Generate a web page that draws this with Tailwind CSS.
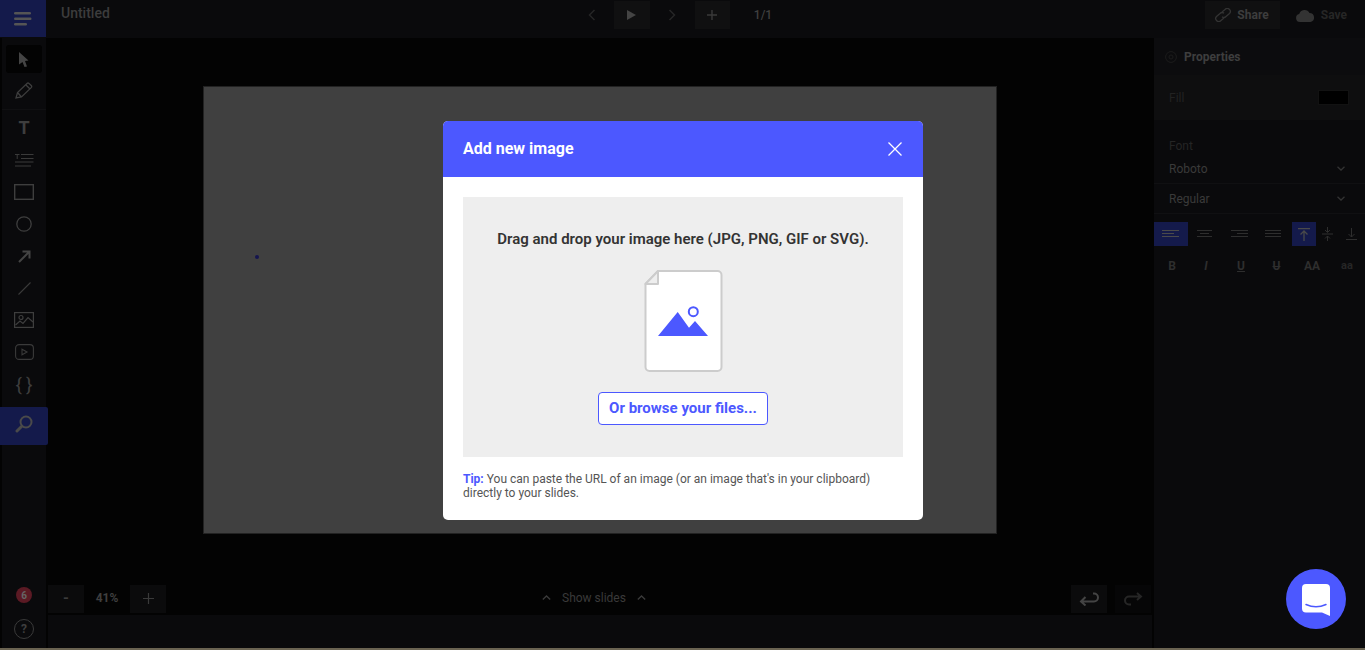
<!DOCTYPE html>
<html lang="en">
  <head>
    <meta charset="UTF-8" />
    <meta name="viewport" content="width=device-width, initial-scale=1.0" />
    <script src="https://cdn.jsdelivr.net/npm/@tailwindcss/browser@4"></script>
    <title>Add new image</title>
  </head>
  <body class="bg-[#030303] overflow-hidden font-['Roboto',sans-serif]">
    <div class="relative w-[1365px] h-[650px] flex flex-col overflow-hidden">
      <!-- top bar -->
      <header class="h-[38px] shrink-0 flex items-start bg-[#0a0a0c]">
        <button class="w-[46px] h-[37px] bg-[#141a4b] flex items-center justify-center">
          <svg width="18" height="14" viewBox="0 0 18 14" fill="#555"><rect width="17" height="2.4" rx="1.2" /><rect y="5.5" width="17.5" height="2.4" rx="1.2" /><rect y="11" width="13" height="2.4" rx="1.2" /></svg>
        </button>
        <span class="ml-[15px] mt-[4px] text-[14px] leading-[18px] font-medium text-[#3c3c3c]">Untitled</span>
        <div class="ml-[470px] flex items-center h-[28px] mt-[1px]">
          <button class="w-[24px] h-[28px] flex items-center justify-center">
            <svg width="8" height="12" viewBox="0 0 8 12" fill="none" stroke="#262626" stroke-width="1.5"><path d="M6.5 1 1.5 6l5 5" /></svg>
          </button>
          <button class="ml-[10px] w-[36px] h-[28px] bg-[#101011] flex items-center justify-center">
            <svg width="9" height="10" viewBox="0 0 9 10" fill="#444" class="-ml-[1px]"><path d="M0 0 9 5 0 10Z" /></svg>
          </button>
          <button class="ml-[10px] w-[24px] h-[28px] flex items-center justify-center">
            <svg width="8" height="12" viewBox="0 0 8 12" fill="none" stroke="#262626" stroke-width="1.5"><path d="M1.5 1l5 5-5 5" /></svg>
          </button>
          <button class="ml-[11px] w-[35px] h-[28px] bg-[#101011] flex items-center justify-center">
            <svg width="12" height="12" viewBox="0 0 12 12" stroke="#3a3a3a" stroke-width="1.4"><path d="M6 1v10M1 6h10" /></svg>
          </button>
          <span class="ml-[24px] text-[12px] font-medium text-[#3f3f3f]">1/1</span>
        </div>
        <div class="ml-auto flex items-center h-[28px] mt-[1px] mr-[18px]">
          <button class="w-[75px] h-[28px] bg-[#101011] flex items-center justify-center gap-[5px] pr-[2px] text-[12px] font-bold text-[#3d3d3d]">
            <svg width="18" height="14" viewBox="0 0 18 14" fill="none" stroke="#333" stroke-width="1.3"><path d="M8 4 11 1.500a3 3 0 0 1 4.500 4L12 8.500a3 3 0 0 1-4 .2" /><path d="M10 10 7 12.500a3 3 0 0 1-4.500-4L6 5.500a3 3 0 0 1 4-.2" /></svg>
            Share
          </button>
          <button class="ml-[15px] w-[52px] h-[28px] flex items-center justify-between text-[12px] font-bold text-[#262626]">
            <svg width="20" height="13" viewBox="0 0 20 13" fill="#333"><path d="M5 13a4 4 0 0 1-.8-7.900 5.500 5.500 0 0 1 10.300-1A4.500 4.500 0 0 1 15.500 13Z" /></svg>
            Save
          </button>
        </div>
      </header>

      <div class="flex-1 min-h-0 flex">
        <!-- tools -->
        <aside class="w-[48px] shrink-0 flex flex-col">
          <div class="flex-1 ml-[2px] mr-[2px] bg-[#0a0a0c] flex flex-col items-center pt-[7px] relative">
            <button class="w-[36px] h-[28px] bg-[#030303] rounded-[3px] flex items-center justify-center">
              <svg width="10" height="15" viewBox="0 0 10 15" fill="#444"><path d="M0 0 9.500 8.500 6 9 8 14.500 5.500 15 3.500 10 0 12.500Z" /></svg>
            </button>
            <button class="w-[36px] h-[34px] flex items-center justify-center">
              <svg width="18" height="17" viewBox="0 0 18 17" fill="none" stroke="#3e3e3e" stroke-width="1.3"><path d="M1 16 2.500 10.500 12 1.500a1.500 1.500 0 0 1 2 0l2.200 2a1.500 1.500 0 0 1 0 2.100L6.500 15ZM2.500 10.500 6.500 15M11 3l4 4" /></svg>
            </button>
            <div class="w-[44px] h-px bg-[#101012] mt-[2px]"></div>
            <button class="w-[36px] h-[34px] flex items-center justify-center text-[18px] font-bold text-[#3e3e3e]">T</button>
            <button class="w-[36px] h-[32px] flex items-center justify-center">
              <svg width="19" height="13" viewBox="0 0 19 13" fill="none" stroke="#3a3a3a"><path d="M0 .5h4.500M2.200 .5V5M6 .5h12.500M6 4.500h12.500M0 8h18.500M0 12h16" /></svg>
            </button>
            <button class="w-[36px] h-[32px] flex items-center justify-center">
              <svg width="20" height="16" viewBox="0 0 20 16" fill="none" stroke="#3e3e3e" stroke-width="1.4"><rect x=".7" y=".7" width="18.600" height="14.600" /></svg>
            </button>
            <button class="w-[36px] h-[32px] flex items-center justify-center">
              <svg width="16" height="16" viewBox="0 0 16 16" fill="none" stroke="#3e3e3e" stroke-width="1.3"><circle cx="8" cy="8" r="7.200" /></svg>
            </button>
            <button class="w-[36px] h-[32px] flex items-center justify-center">
              <svg width="13" height="13" viewBox="0 0 13 13" fill="none" stroke="#444" stroke-width="2"><path d="M1 12 11.500 1.500M4.500 1.500h7v7" /></svg>
            </button>
            <button class="w-[36px] h-[32px] flex items-center justify-center">
              <svg width="13" height="13" viewBox="0 0 13 13" fill="none" stroke="#3a3a3a" stroke-width="1.100"><path d="M.5 12.500 12.500.5" /></svg>
            </button>
            <button class="w-[36px] h-[32px] flex items-center justify-center">
              <svg width="20" height="16" viewBox="0 0 20 16" fill="none" stroke="#3e3e3e" stroke-width="1.200"><rect x=".6" y=".6" width="18.800" height="14.800" /><circle cx="7" cy="5.500" r="2" /><path d="M1.500 13 6 9l3 2.500 5-6 5 4.500" /></svg>
            </button>
            <button class="w-[36px] h-[32px] flex items-center justify-center">
              <svg width="19" height="16" viewBox="0 0 19 16" fill="none" stroke="#3a3a3a" stroke-width="1.100"><rect x=".6" y=".6" width="17.800" height="14.800" rx="3.500" /><path d="M7 5.200v5.600l5-2.800Z" /></svg>
            </button>
            <button class="w-[36px] h-[32px] flex items-center justify-center text-[19px] leading-none text-[#3e3e3e] tracking-[4px] pl-[4px]">{}</button>
            <div class="absolute left-[-2px] top-[369px] w-[48px] h-[38px] bg-[#141a4b] rounded-r-[2px] flex items-center justify-center pb-[4px]">
              <svg width="18" height="18" viewBox="0 0 18 18" fill="none" stroke="#4a4a4a"><circle cx="11" cy="7" r="5.500" stroke-width="2" /><path d="M6.500 11.500 2 16" stroke-width="3" stroke-linecap="round" /></svg>
            </div>
            <div class="mt-auto mb-[16px] w-[16px] h-[16px] rounded-full bg-[#5b1a24] flex items-center justify-center text-[10px] font-bold text-[#666]">6</div>
            <div class="w-[20px] h-[20px] rounded-full border border-[#3a3a3a] flex items-center justify-center text-[12px] font-bold text-[#3e3e3e] mb-[9px]">?</div>
          </div>
        </aside>

        <!-- canvas -->
        <main class="flex-1 min-w-0 flex flex-col bg-[#030303]">
          <div class="flex-1 min-h-0 pt-[48px] flex justify-center items-start">
            <div class="relative w-[794px] h-[448px] bg-[#404040] border border-[#222]">
              <span class="absolute left-[51px] top-[168px] w-[4px] h-[4px] rounded-full bg-[#15154f]"></span>
            </div>
          </div>
          <div class="h-[33px] flex items-center px-0 shrink-0 pt-[4px]">
            <button class="w-[36px] h-[28px] bg-[#0b0b0c] flex items-center justify-center text-[#3c3c3c] text-[15px] font-bold">-</button>
            <span class="w-[46px] text-center text-[12px] font-bold text-[#3f3f3f] pb-px">41%</span>
            <button class="w-[36px] h-[28px] bg-[#0b0b0c] flex items-center justify-center">
              <svg width="11" height="11" viewBox="0 0 11 11" stroke="#3a3a3a" stroke-width="1.200"><path d="M5.500 0v11M0 5.500h11" /></svg>
            </button>
            <div class="ml-[376px] flex items-center gap-[11px] text-[12px] text-[#3a3a3a] pb-[2px]">
              <svg width="9" height="5" viewBox="0 0 9 5" fill="none" stroke="#3a3a3a" stroke-width="1.400"><path d="M.8 4.500 4.500 1l3.700 3.500" /></svg>
              <span>Show slides</span>
              <svg width="9" height="5" viewBox="0 0 9 5" fill="none" stroke="#3a3a3a" stroke-width="1.400"><path d="M.8 4.500 4.500 1l3.700 3.500" /></svg>
            </div>
            <button class="ml-auto w-[36px] h-[28px] bg-[#0b0b0c] flex items-center justify-center">
              <svg width="20" height="14" viewBox="0 0 20 14" fill="none" stroke="#444" stroke-width="2"><path d="M14 1.500h1a4 4 0 0 1 0 8H2M6.500 5 2 9.500 6.500 13.500" /></svg>
            </button>
            <button class="ml-[8px] mr-px w-[36px] h-[28px] bg-[#060607] flex items-center justify-center">
              <svg width="20" height="14" viewBox="0 0 20 14" fill="none" stroke="#262626" stroke-width="2"><path d="M8 12.500H6a4 4 0 0 1 0-8h12M14 1l4 3.500-4 3.500" /></svg>
            </button>
          </div>
          <div class="mt-[2px] h-[33px] bg-[#0a0a0c] shrink-0"></div>
        </main>

        <!-- properties -->
        <aside class="w-[211px] shrink-0 bg-[#0a0a0c] flex flex-col ml-[2px]">
          <div class="h-[37px] bg-[#0c0c0e] flex items-center pl-[11px] gap-[7px] text-[12px] font-bold text-[#3e3e3e]">
            <svg width="12" height="12" viewBox="0 0 12 12" fill="none" stroke="#1c1c1c"><circle cx="6" cy="6" r="5.400" /><circle cx="6" cy="6" r="2" /></svg>
            Properties
          </div>
          <div class="h-[45px] bg-[#0e0e0f] flex items-center justify-between pl-[15px] pr-[16px] text-[12px] text-[#222]">
            Fill
            <span class="w-[31px] h-[15px] bg-black border border-[#121212]"></span>
          </div>
          <p class="mt-[19px] pl-[15px] text-[12px] leading-[14px] text-[#252525]">Font</p>
          <div class="mt-[3px] h-[28px] pl-[15px] pr-[20px] flex items-center justify-between border-b border-[#101012] text-[12px] text-[#3a3a3a] pb-[2px]">
            Roboto
            <svg width="8" height="5" viewBox="0 0 8 5" fill="none" stroke="#333" stroke-width="1.300"><path d="M.5.800 4 4 7.500.800" /></svg>
          </div>
          <div class="h-[30px] pl-[15px] pr-[20px] flex items-center justify-between border-b border-[#101012] text-[12px] text-[#3a3a3a]">
            Regular
            <svg width="8" height="5" viewBox="0 0 8 5" fill="none" stroke="#333" stroke-width="1.300"><path d="M.5.800 4 4 7.500.800" /></svg>
          </div>
          <div class="mt-[8px] h-[24px] flex items-center">
            <span class="w-[34px] h-[24px] bg-[#141a4b] flex items-center justify-center"><svg width="18" height="8" viewBox="0 0 18 8" stroke="#4a4a4a"><path d="M0 .5h17M0 3.500h12M0 6.500h17" /></svg></span>
            <span class="w-[34px] flex justify-center"><svg width="16" height="8" viewBox="0 0 16 8" stroke="#2e2e2e"><path d="M0 .5h15M3 3.500h9M0 6.500h15" /></svg></span>
            <span class="w-[34px] flex justify-center"><svg width="17" height="8" viewBox="0 0 17 8" stroke="#2e2e2e"><path d="M0 .5h17M6 3.500h11M0 6.500h17" /></svg></span>
            <span class="w-[33px] flex justify-center"><svg width="16" height="8" viewBox="0 0 16 8" stroke="#2e2e2e"><path d="M0 .5h16M0 3.500h16M0 6.500h16" /></svg></span>
            <span class="ml-[3px] w-[24px] h-[24px] bg-[#141a4b] flex items-center justify-center"><svg width="12" height="13" viewBox="0 0 12 13" fill="none" stroke="#4a4a4a" stroke-width="1.300"><path d="M0 .7h12M6 13V3.500M2.500 6.500 6 3l3.500 3.500" /></svg></span>
            <span class="w-[23px] flex justify-center"><svg width="11" height="14" viewBox="0 0 11 14" fill="none" stroke="#2e2e2e"><path d="M0 7h11M5.500 0v5M3 3l2.500 2.500L8 3M5.500 14V9M3 11.500 5.500 9 8 11.500" /></svg></span>
            <span class="w-[24px] flex justify-center"><svg width="11" height="12" viewBox="0 0 11 12" fill="none" stroke="#2e2e2e"><path d="M0 11.500h11M5.500 0v9M2.500 6l3 3 3-3" /></svg></span>
          </div>
          <div class="mt-[8px] h-[24px] pl-px flex items-center text-[12px] font-bold text-[#2e2e2e]">
            <span class="w-[34px] text-center">B</span>
            <span class="w-[34px] text-center italic">I</span>
            <span class="w-[36px] text-center underline">U</span>
            <span class="w-[35px] text-center line-through">U</span>
            <span class="w-[36px] text-center">AA</span>
            <span class="w-[34px] text-center text-[11px] text-[#262626]">aa</span>
          </div>
        </aside>
      </div>
      <div class="h-[2px] shrink-0 bg-[#6b6452]"></div>

      <!-- modal -->
      <div class="absolute inset-0 flex justify-center items-start pt-[121px] pl-[1px]">
        <div class="w-[480px] h-[399px] bg-white rounded-[5px] overflow-hidden flex flex-col">
          <div class="h-[56px] shrink-0 bg-[#4c58ff] flex items-center justify-between pl-[20px] pr-[21px]">
            <h2 class="text-[16px] font-bold text-white">Add new image</h2>
            <svg width="14" height="14" viewBox="0 0 14 14" stroke="#fff" stroke-width="1.300"><path d="M.5.500l13 13M13.500.500l-13 13" /></svg>
          </div>
          <div class="flex-1 p-[20px] pb-0">
            <div class="h-[260px] bg-[#eeeeee] flex flex-col items-center pt-[33px]">
              <p class="text-[15px] leading-[18px] font-semibold text-[#333]">Drag and drop your image here (JPG, PNG, GIF or SVG).</p>
              <svg class="mt-[22px]" width="79" height="102" viewBox="0 0 79 102">
                <path d="M14 1H73.500a4 4 0 0 1 4 4V97a4 4 0 0 1-4 4H5.500a4 4 0 0 1-4-4V14Z" fill="#fff" stroke="#cccccc" stroke-width="2" />
                <path d="M14 1V14H1.500Z" fill="#eeeeee" stroke="#cccccc" stroke-width="2" stroke-linejoin="round" />
                <path d="M14 66 33.700 42 45 57.700 51 51 64 66Z" fill="#4c58ff" />
                <circle cx="49.300" cy="41.700" r="4.500" fill="none" stroke="#4c58ff" stroke-width="2" />
              </svg>
              <button class="mt-[20px] w-[170px] h-[33px] bg-white border border-[#4c58ff] rounded-[4px] text-[15px] font-bold text-[#4c58ff]">Or browse your files...</button>
            </div>
            <p class="mt-[15px] text-[12px] leading-[14px] text-[#555]"><span class="font-bold text-[#4c58ff]">Tip:</span> You can paste the URL of an image (or an image that's in your clipboard) directly to your slides.</p>
          </div>
        </div>
      </div>

      <!-- chat launcher -->
      <button class="absolute left-[1286px] top-[569px] w-[60px] h-[60px] rounded-full bg-[#4c58ff] flex items-center justify-center">
        <svg width="28" height="32" viewBox="0 0 28 32" class="mt-[1px]">
          <path d="M4 0H24a4 4 0 0 1 4 4V32L20 28.500H4a4 4 0 0 1-4-4V4a4 4 0 0 1 4-4Z" fill="#fff" />
          <path d="M4 20.500Q14 25 24 20.500" fill="none" stroke="#4c58ff" stroke-width="1.500" stroke-linecap="round" />
        </svg>
      </button>
    </div>
  </body>
</html>
